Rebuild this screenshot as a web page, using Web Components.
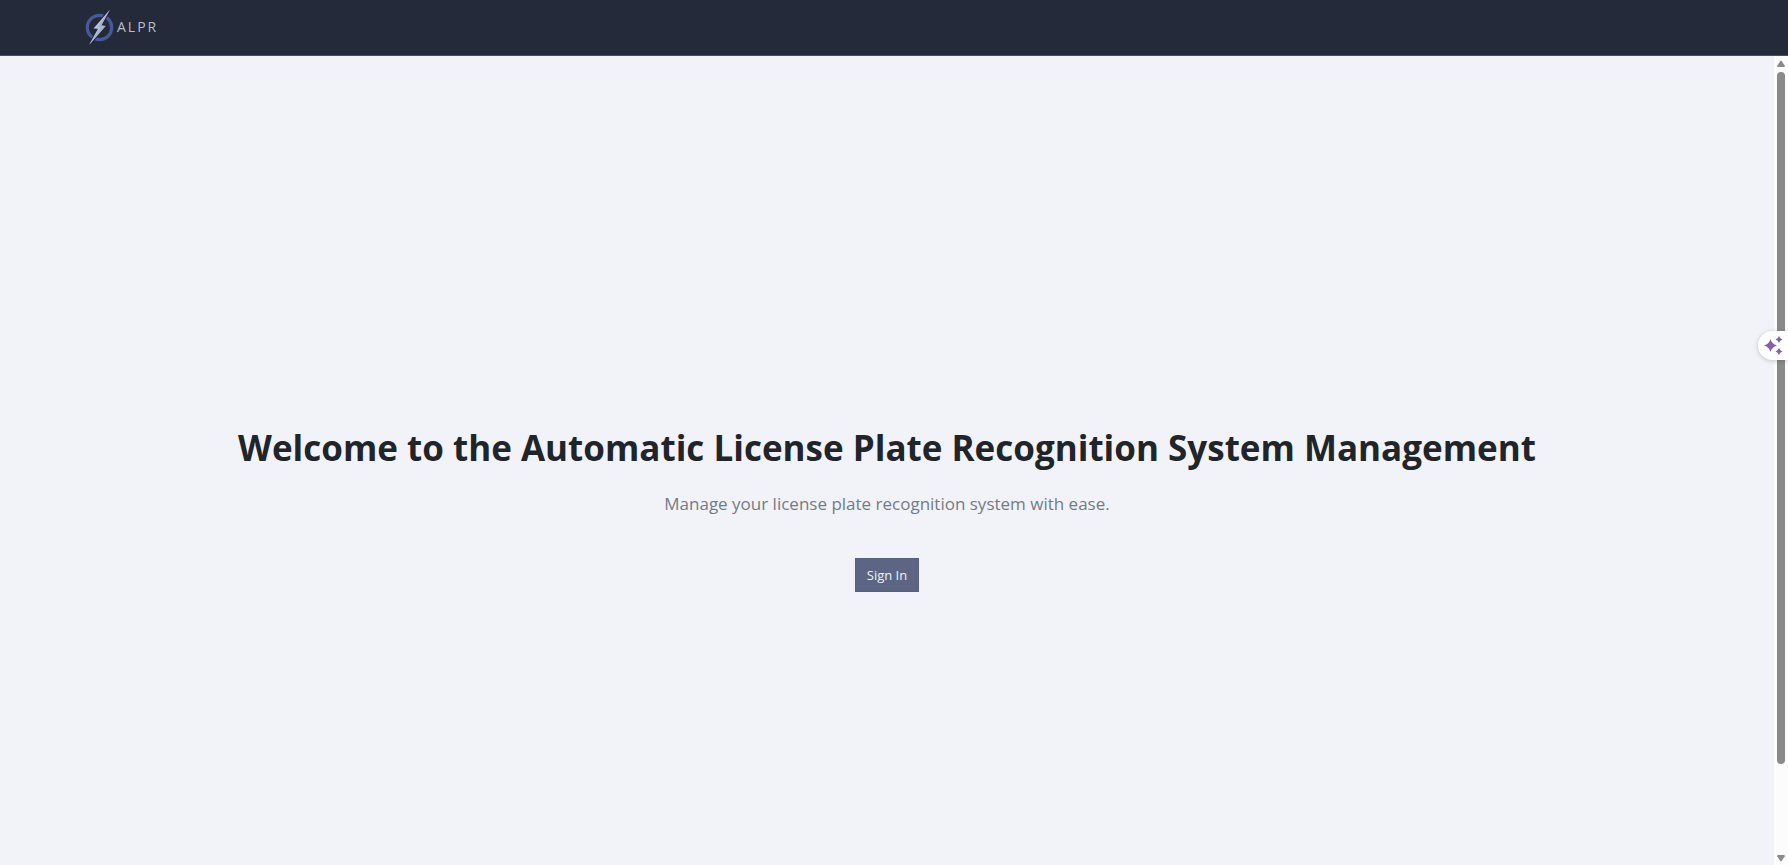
<!DOCTYPE html>
<html lang="en">
<head>
<meta charset="utf-8">
<title>ALPR</title>
<style>
  html, body { height: 100%; margin: 0; }
  body { font-family: "Open Sans", "Noto Sans", sans-serif; background: #f1f3f9; color: #212529; overflow: hidden; }
</style>
</head>
<body>
<alpr-app>
  <alpr-navbar slot="header">ALPR</alpr-navbar>
  <alpr-hero>
    <span slot="title">Welcome to the Automatic License Plate Recognition System Management</span>
    <span slot="lead">Manage your license plate recognition system with ease.</span>
    <alpr-button slot="action">Sign In</alpr-button>
  </alpr-hero>
  <alpr-scrollbar slot="rail"></alpr-scrollbar>
  <alpr-assist slot="float"></alpr-assist>
</alpr-app>
<script>
  const define = (name, html) => {
    const template = document.createElement("template");
    template.innerHTML = html;
    customElements.define(name, class extends HTMLElement {
      constructor() {
        super();
        this.attachShadow({ mode: "open" }).append(template.content.cloneNode(true));
      }
    });
  };

  define("alpr-app", `
    <style>
      :host { display: flex; flex-direction: column; height: 100vh; position: relative; }
      .body { display: flex; flex: 1; min-height: 0; }
      main { flex: 1; min-width: 0; display: flex; }
    </style>
    <slot name="header"></slot>
    <div class="body"><main><slot></slot></main><slot name="rail"></slot></div>
    <slot name="float"></slot>`);

  define("alpr-navbar", `
    <style>
      :host { display: block; background: #242a39; border-bottom: 1px solid #4a4f5e; }
      nav { display: flex; align-items: center; height: 54px; padding: 0 83px 1px; }
      a { display: flex; align-items: center; gap: 2px; color: #b9bdc7; text-decoration: none; font-size: 14px; line-height: 20px; letter-spacing: 2px; }
      svg { display: block; width: 32px; height: 38px; }
    </style>
    <nav><a href="#">
      <svg viewBox="0 0 32 38" aria-hidden="true">
        <circle cx="16.5" cy="19.5" r="12.2" fill="none" stroke="#47599b" stroke-width="3.2"/>
        <path d="M27 1.5 10.5 20.4 15 20.8 6 37 22.6 18 18.2 17.4Z" fill="#b9c3dc" stroke="#242a39" stroke-width="2.2" paint-order="stroke"/>
        <path d="M27 1.5 18.2 17.4 22.6 18 6 37 17.6 19.6 14.6 19Z" fill="#a3b1d2"/>
      </svg>
      <span><slot></slot></span>
    </a></nav>`);

  define("alpr-hero", `
    <style>
      :host { display: flex; flex: 1; flex-direction: column; align-items: center; justify-content: center; text-align: center; padding: 94px 16px 0; }
      h1 { margin: 0 0 18px; font-size: 35px; line-height: 48px; font-weight: 700; }
      p { margin: 0 0 40px; font-size: 17px; line-height: 28px; color: #747b84; }
    </style>
    <h1><slot name="title"></slot></h1>
    <p><slot name="lead"></slot></p>
    <slot name="action"></slot>`);

  define("alpr-button", `
    <style>
      :host { display: block; }
      button { display: block; margin: 0; border: 1px solid #57607e; border-radius: 0; background: #5c6584; color: #f1f3f9; font: inherit; font-size: 13px; line-height: 20px; padding: 6px 11px; cursor: pointer; }
    </style>
    <button type="button"><slot></slot></button>`);

  define("alpr-scrollbar", `
    <style>
      :host { display: flex; flex-direction: column; align-items: center; width: 14px; background: #fcfcfc; }
      svg { display: block; width: 8px; height: 16px; flex: none; fill: #8a8a8a; }
      .track { flex: 1; width: 8px; }
      .thumb { height: 89%; border-radius: 4px; background: #8a8a8a; }
    </style>
    <svg viewBox="0 0 8 16" aria-hidden="true"><path d="M3.2 5.2Q4 4 4.8 5.2L7.8 9.8Q8 11 7 11H1Q0 11 .2 9.8Z"/></svg>
    <div class="track"><div class="thumb"></div></div>
    <svg viewBox="0 0 8 16" aria-hidden="true"><path d="M3.2 11.8Q4 13 4.8 11.8L7.8 7.2Q8 6 7 6H1Q0 6 .2 7.2Z"/></svg>`);

  define("alpr-assist", `
    <style>
      :host { display: block; position: absolute; right: 0; top: 331px; }
      button { display: block; margin: 0; border: 0; padding: 4px 5px 5px; border-radius: 15px 0 0 15px; background: #fff; box-shadow: 0 1px 5px #0003; cursor: pointer; }
      svg { display: block; width: 20px; height: 20px; fill: #8360ac; }
    </style>
    <button type="button" aria-label="Assistant">
      <svg viewBox="0 0 20 20"><path d="M7.5 4Q8.7 9 14 10.5 8.7 12 7.5 17 6.3 12 1 10.5 6.3 9 7.5 4ZM16 1Q16.8 3.7 19.5 4.5 16.8 5.3 16 8 15.2 5.3 12.5 4.5 15.2 3.7 16 1ZM16 13Q16.8 15.7 19.5 16.5 16.8 17.3 16 20 15.2 17.3 12.5 16.5 15.2 15.7 16 13Z"/></svg>
    </button>`);
</script>
</body>
</html>
